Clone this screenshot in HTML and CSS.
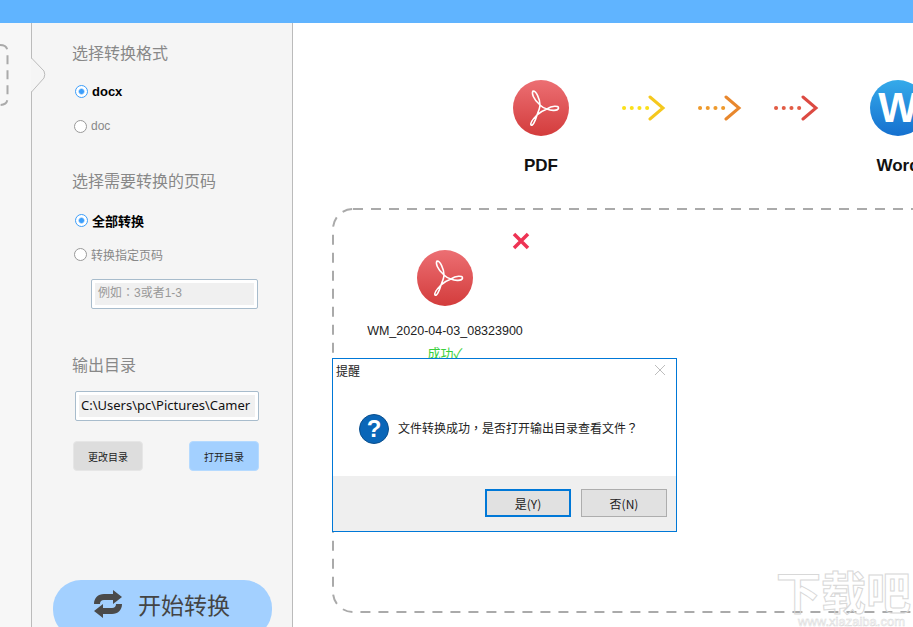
FILE: index.html
```html
<!DOCTYPE html>
<html>
<head>
  <meta charset="utf-8">
  <title>PDF转Word</title>
  <link rel="stylesheet" href="styles.css">
</head>
<body>
  <svg width="0" height="0" class="defs">
    <defs>
      <linearGradient id="redfill" x1="0" y1="0" x2="0" y2="1">
        <stop offset="0" stop-color="#ec6f73"/>
        <stop offset="1" stop-color="#d33c3c"/>
      </linearGradient>
      <symbol id="pdf" viewBox="0 0 56 56">
        <circle cx="28" cy="28" r="28" fill="url(#redfill)"/>
        <path d="M20 11C18.500 13 20 19 27 25C30 28 32 28.800 34 29C38 31 45 31 45.500 28C45.500 25.500 39 25.500 34 29C30 30.500 26 33 24 35C21 38 17 43 18 45C19.500 46.500 22 42 24 35C25.500 31 27 28 27 25C27 19 23 10.500 20 11Z" fill="none" stroke="#fff" stroke-width="1.600" stroke-linejoin="round"/>
      </symbol>
    </defs>
  </svg>

  <div class="app">
    <div class="topbar"></div>
    <div class="content">
      <div class="rail">
        <svg class="rail-dash" width="31" height="80" viewBox="0 0 31 80">
          <path d="M0 7C5 7 7.500 9 7.500 14V60C7.500 65 5 67 0 67" fill="none" stroke="#aaa" stroke-width="2" stroke-dasharray="9 6"/>
        </svg>
        <svg class="notch" width="16" height="38" viewBox="0 0 16 38">
          <path d="M0 1L13 14Q14 17 13 21L0 35Z" fill="#f5f5f5"/>
          <path d="M0.500 1L13 14Q14.500 17.500 13 21L0.500 35" fill="none" stroke="#bbb"/>
        </svg>
      </div>

      <div class="panel">
        <h3 class="panel-title">选择转换格式</h3>
        <label class="choice choice-on first"><input type="radio" name="fmt" checked>docx</label>
        <label class="choice"><input type="radio" name="fmt">doc</label>

        <h3 class="panel-title pages">选择需要转换的页码</h3>
        <label class="choice choice-on first zh"><input type="radio" name="range" checked>全部转换</label>
        <label class="choice zh"><input type="radio" name="range">转换指定页码</label>
        <div class="field field-pages"><span>例如：3或者1-3</span></div>

        <h3 class="panel-title output">输出目录</h3>
        <div class="field field-path"><span>C:\Users\pc\Pictures\Camer</span></div>
        <div class="dir-buttons">
          <button type="button" class="small-btn">更改目录</button>
          <button type="button" class="small-btn small-btn-blue">打开目录</button>
        </div>

        <button type="button" class="start-btn">
          <svg width="30" height="30" viewBox="0 0 30 30">
            <path d="M20 1L29 8L20 15V11H11C8.500 11 7 12.500 7 15H1C1 9 5 5 11 5H20Z" fill="#4a4a4a"/>
            <path d="M10 29L1 22L10 15V19H19C21.500 19 23 17.500 23 15H29C29 21 25 25 19 25H10Z" fill="#4a4a4a"/>
          </svg>
          开始转换
        </button>
      </div>

      <div class="main">
        <div class="flow">
          <div class="flow-item">
            <svg class="round-icon"><use href="#pdf"/></svg>
            <span>PDF</span>
          </div>
          <svg class="arrows" width="200" height="26" viewBox="0 0 200 26">
            <g fill="none" stroke-linecap="round" stroke-width="3">
              <path d="M3 13H28" stroke="#fbe01a" stroke-width="4" stroke-dasharray="0.100 7.600"/>
              <path d="M29 2L42 13L29 24" stroke="#f5c81e"/>
              <path d="M79 13H103" stroke="#ee9a2c" stroke-width="4" stroke-dasharray="0.100 7.600"/>
              <path d="M105 2L118 13L105 24" stroke="#e8872d"/>
              <path d="M155 13H180" stroke="#e25c45" stroke-width="4" stroke-dasharray="0.100 7.600"/>
              <path d="M182 2L195 13L182 24" stroke="#dc4a42"/>
            </g>
          </svg>
          <div class="flow-item flow-word">
            <div class="word-icon">W</div>
            <span>Word</span>
          </div>
        </div>

        <div class="dropzone">
          <svg class="dropzone-line" width="720" height="406">
            <rect x="1" y="1" width="700" height="403" rx="20" fill="none" stroke="#aaa" stroke-width="2" stroke-dasharray="10 8"/>
          </svg>
          <div class="file">
            <svg class="round-icon"><use href="#pdf"/></svg>
            <div class="file-name">WM_2020-04-03_08323900</div>
            <div class="file-state">成功✓</div>
          </div>
          <svg class="file-remove" width="18" height="18" viewBox="0 0 18 18">
            <path d="M2 2L16 16M16 2L2 16" stroke="#ee3354" stroke-width="3.500"/>
          </svg>
        </div>
      </div>
    </div>

    <div class="watermark">
      <div class="watermark-name">下载吧</div>
      <div class="watermark-url">www.xiazaiba.com</div>
    </div>

    <div class="dialog">
      <div class="dialog-head">
        <span>提醒</span>
        <svg width="12" height="12" viewBox="0 0 12 12">
          <path d="M1 1L11 11M11 1L1 11" stroke="#bdbdbd"/>
        </svg>
      </div>
      <div class="dialog-body">
        <div class="question">?</div>
        <p>文件转换成功，是否打开输出目录查看文件？</p>
      </div>
      <div class="dialog-foot">
        <button type="button" class="dialog-btn dialog-btn-default">是(Y)</button>
        <button type="button" class="dialog-btn">否(N)</button>
      </div>
    </div>
  </div>
</body>
</html>
```

FILE: styles.css
```css
* {
  box-sizing: border-box;
}
html, body {
  margin: 0;
  height: 100%;
  overflow: hidden;
}
body {
  font-family: "Liberation Sans", "Noto Sans CJK SC", sans-serif;
  background: #fff;
}
.defs {
  position: absolute;
}
.app {
  position: relative;
  width: 913px;
  height: 627px;
  overflow: hidden;
}
.topbar {
  height: 23px;
  background: #60b4ff;
}
.content {
  display: flex;
  height: 604px;
}

/* left strip */
.rail {
  position: relative;
  width: 32px;
  flex: none;
  background: #f7f7f7;
  border-right: 1px solid #bbb;
}
.rail-dash {
  position: absolute;
  left: 0;
  top: 15px;
}
.notch {
  position: absolute;
  left: 31px;
  top: 34px;
  z-index: 2;
}

/* settings panel */
.panel {
  width: 261px;
  flex: none;
  background: #f5f5f5;
  border-right: 1px solid #bbb;
  padding: 20px 0 0 40px;
}
.panel-title {
  margin: 0;
  font-size: 16px;
  line-height: 22px;
  font-weight: normal;
  color: #888;
}
.pages {
  margin-top: 37px;
}
.output {
  margin-top: 46px;
}
.choice {
  display: flex;
  align-items: center;
  height: 16px;
  margin: 19px 0 0 2px;
  font-size: 12px;
  color: #888;
}
.choice.zh {
  margin-top: 18px;
  font-size: 12px;
}
.choice.first {
  margin-top: 18px;
}
.choice.zh.first {
  margin-top: 19px;
}
.choice-on {
  margin-left: 3px;
  font-size: 13px;
  font-weight: bold;
  color: #000;
}
.choice.zh.choice-on {
  font-size: 13px;
}
.choice input {
  appearance: none;
  width: 13px;
  height: 13px;
  margin: 0 4px 0 0;
  border: 1px solid #999;
  border-radius: 50%;
  background: #fff;
  flex: none;
}
.choice input:checked {
  border-color: #3c9efb;
  background: radial-gradient(circle, #3c9efb 0, #3c9efb 2px, #fff 3.500px);
}
.field {
  background: #fff;
  border: 1px solid #a8bccc;
  border-radius: 2px;
  padding: 3px;
}
.field span {
  display: block;
  height: 22px;
  line-height: 21px;
  background: #f0f0f0;
  white-space: nowrap;
  overflow: hidden;
}
.field-pages {
  width: 167px;
  height: 30px;
  margin: 17px 0 0 19px;
  font-family: "Liberation Sans", "Noto Sans CJK TC", sans-serif;
  font-size: 12px;
  color: #999;
}
.field-pages span {
  padding-left: 3px;
}
.field-path {
  width: 184px;
  height: 30px;
  margin: 14px 0 0 3px;
  font-family: "Noto Sans", "Noto Sans CJK SC", sans-serif;
  font-size: 13px;
  color: #111;
}
.field-path span {
  padding-left: 2px;
}
.dir-buttons {
  display: flex;
  justify-content: space-between;
  width: 186px;
  margin: 20px 0 0 1px;
}
.small-btn {
  width: 70px;
  height: 30px;
  padding: 0;
  border: 1px solid #e6e6e6;
  border-radius: 4px;
  background: #ddd;
  font-family: inherit;
  font-size: 10px;
  color: #222;
}
.small-btn-blue {
  border-color: #b5daff;
  background: #a3d0ff;
}
.start-btn {
  display: flex;
  align-items: center;
  gap: 15px;
  width: 219px;
  height: 58px;
  margin: 109px 0 0 -19px;
  padding: 0 0 11px 40px;
  border: none;
  border-radius: 28px;
  background: #a3d0ff;
  font-family: inherit;
  font-size: 23px;
  color: #444;
}

/* right side */
.main {
  flex: 1;
  min-width: 0;
  overflow: hidden;
}
.flow {
  display: flex;
  height: 185px;
  padding: 57px 0 0 220px;
  width: 760px;
}
.flow-item {
  display: flex;
  flex-direction: column;
  align-items: center;
  width: 56px;
  flex: none;
  font-size: 17px;
  font-weight: bold;
  color: #111;
}
.flow-item span {
  margin-top: 20px;
  line-height: 20px;
}
.round-icon {
  width: 56px;
  height: 56px;
  display: block;
}
.arrows {
  flex: none;
  margin: 15px 0 0 52px;
}
.flow-word {
  margin-left: 49px;
}
.word-icon {
  width: 56px;
  height: 56px;
  border-radius: 50%;
  background: linear-gradient(#35aaea, #1570cf);
  color: #fff;
  font-size: 42px;
  line-height: 56px;
  text-align: center;
}
.dropzone {
  position: relative;
  height: 406px;
  width: 700px;
  margin-left: 39px;
}
.dropzone-line {
  position: absolute;
  left: 0;
  top: 0;
}
.file {
  display: flex;
  flex-direction: column;
  align-items: center;
  width: 160px;
  margin-left: 33px;
  padding-top: 42px;
}
.file-name {
  margin-top: 15px;
  font-size: 12.500px;
  line-height: 20px;
  color: #222;
  white-space: nowrap;
}
.file-state {
  margin-top: 3px;
  font-size: 13px;
  line-height: 20px;
  color: #39d03c;
}
.file-remove {
  position: absolute;
  left: 180px;
  top: 24px;
}
.watermark {
  position: absolute;
  left: 776px;
  top: 566px;
  width: 137px;
  color: transparent;
  -webkit-text-stroke: 1px #d8d8d8;
  pointer-events: none;
  white-space: nowrap;
}
.watermark-name {
  font-family: "Noto Sans CJK SC", sans-serif;
  font-size: 45px;
  font-weight: bold;
  line-height: 50px;
}
.watermark-url {
  font-size: 13px;
  line-height: 11px;
  -webkit-text-stroke: 0.500px #d8d8d8;
  text-align: right;
  padding-right: 8px;
}

/* message box */
.dialog {
  position: absolute;
  left: 332px;
  top: 358px;
  width: 345px;
  height: 174px;
  background: #fff;
  border: 1px solid #0078d7;
  display: flex;
  flex-direction: column;
  font-family: "Noto Sans CJK TC", sans-serif;
  font-size: 12px;
  color: #222;
}
.dialog-head {
  display: flex;
  justify-content: space-between;
  align-items: center;
  height: 22px;
  padding: 0 10px 0 3px;
}
.dialog-body {
  display: flex;
  align-items: center;
  gap: 9px;
  height: 95px;
  padding: 0 0 0 26px;
}
.dialog-body p {
  margin: 0 0 3px;
}
.question {
  width: 30px;
  height: 30px;
  border-radius: 50%;
  background: #0a66b8;
  border: 1px solid #0b4f8d;
  color: #fff;
  font-family: "Liberation Sans", sans-serif;
  font-size: 24px;
  font-weight: bold;
  line-height: 28px;
  text-align: center;
}
.dialog-foot {
  flex: 1;
  display: flex;
  justify-content: flex-end;
  gap: 10px;
  padding: 13px 9px 0 0;
  background: #efefef;
}
.dialog-btn {
  width: 86px;
  height: 28px;
  padding: 0;
  border: 1px solid #adadad;
  background: #e1e1e1;
  font-family: inherit;
  font-size: 12px;
  color: #222;
}
.dialog-btn-default {
  border: 2px solid #0078d7;
}
```
